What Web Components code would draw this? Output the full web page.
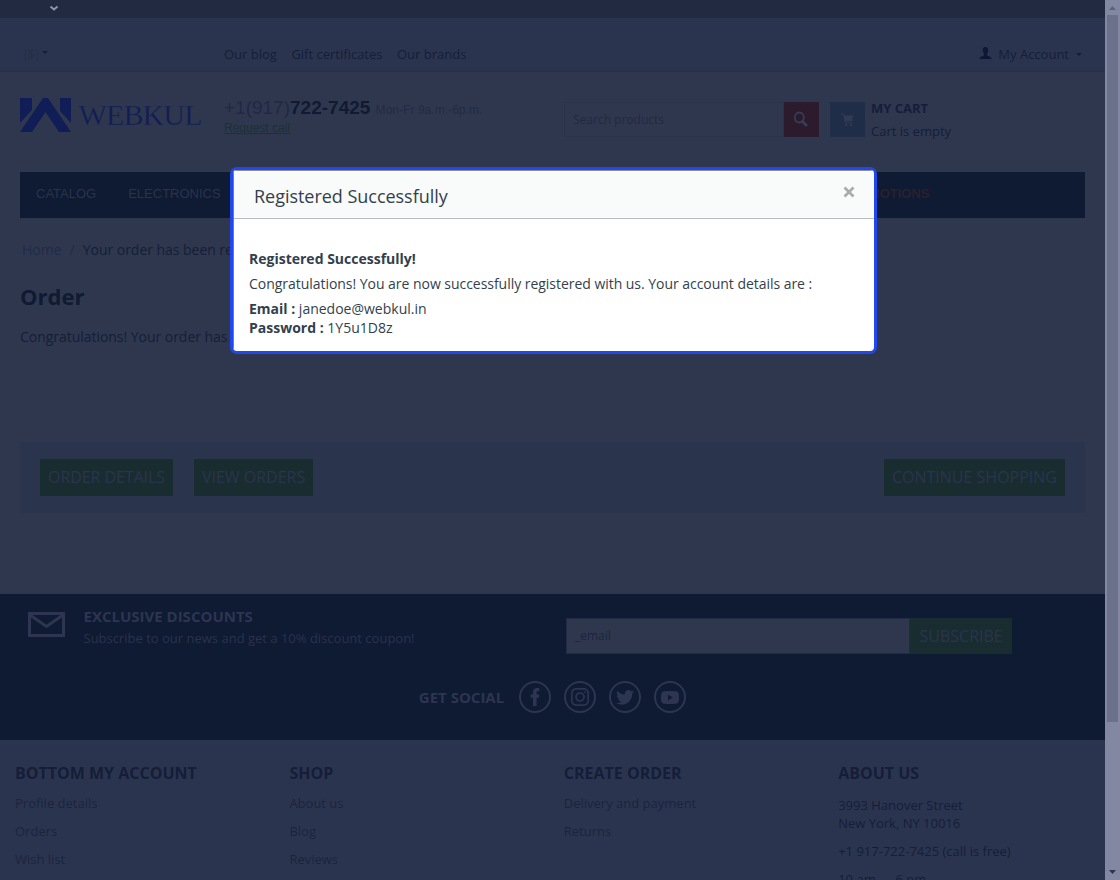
<!DOCTYPE html>
<html lang="en">
<head>
<meta charset="utf-8">
<title>Order</title>
<style>
	html, body {
		margin: 0;
		height: 880px;
		overflow: hidden;
	}
	body {
		font: 13px/18px "Open Sans", sans-serif;
		background: #2f374e;
		color: #141e38;
		--navy: #0f1a33;
		--strip: #2b344e;
		--green: #192d30;
	}
</style>
</head>
<body>
<shop-page>
	<top-panel slot="header"></top-panel>
	<shop-header slot="header"></shop-header>
	<shop-nav slot="header"></shop-nav>
	<order-content></order-content>
	<subscribe-panel slot="footer"></subscribe-panel>
	<footer-links slot="footer">
		<footer-column heading="BOTTOM MY ACCOUNT"><a>Profile details</a><a>Orders</a><a>Wish list</a></footer-column>
		<footer-column heading="SHOP"><a>About us</a><a>Blog</a><a>Reviews</a></footer-column>
		<footer-column heading="CREATE ORDER"><a>Delivery and payment</a><a>Returns</a></footer-column>
		<footer-column heading="ABOUT US" contact><p>3993 Hanover Street<br>New York, NY 10016</p><p>+1 917-722-7425 (call is free)</p><p>10 am — 6 pm</p></footer-column>
	</footer-links>
	<modal-dialog slot="dialog" heading="Registered Successfully">
		<b>Registered Successfully!</b>
		<p>Congratulations! You are now successfully registered with us. Your account details are :</p>
		<div><b>Email :</b> janedoe@webkul.in</div>
		<div><b>Password :</b> 1Y5u1D8z</div>
	</modal-dialog>
</shop-page>

<script>
function define(name,html){
	customElements.define(name,class extends HTMLElement {
		constructor(){
			super();
			this.attachShadow({mode:"open"});
			this.shadowRoot.innerHTML = html;
			let heading = this.shadowRoot.getElementById("heading");
			if (heading){
				heading.textContent = this.getAttribute("heading");
			}
		}
	});
}

define("shop-page",`
	<style>
		:host {
			display: flex;
			position: relative;
			width: 1120px;
			height: 880px;
			overflow: hidden;
		}
		main {
			width: 1105px;
			flex: none;
		}
	</style>
	<main>
		<slot name="header"></slot>
		<slot></slot>
		<slot name="footer"></slot>
	</main>
	<scroll-bar></scroll-bar>
	<slot name="dialog"></slot>
`);

define("scroll-bar",`
	<style>
		:host {
			display: flex;
			flex-direction: column;
			align-items: center;
			box-sizing: border-box;
			width: 15px;
			height: 880px;
			background: #8288a2;
		}
		svg {
			display: block;
			flex: none;
		}
		i {
			width: 11px;
			height: 707px;
			background: #6b718a;
		}
		span {
			flex: 1;
		}
	</style>
	<svg width="15" height="15"><path d="M4 10h7L7.500 6z" fill="#5d637c"/></svg>
	<i></i>
	<span></span>
	<svg width="15" height="15"><path d="M4 5h7L7.500 9z" fill="#2c334b"/></svg>
`);

define("drop-caret",`
	<style>
		:host {
			display: inline-block;
			border: 3px solid transparent;
			border-top-color: currentColor;
			border-bottom: 0;
		}
	</style>
`);

define("top-panel",`
	<style>
		:host {
			display: block;
		}
		.bar {
			height: 18px;
			background: #222a42;
		}
		.bar svg {
			display: block;
			margin-left: 49px;
		}
		.links {
			display: flex;
			align-items: center;
			box-sizing: border-box;
			height: 54px;
			padding: 19px 23px 0 24px;
			background: var(--strip);
			border-bottom: 1px solid #27304b;
		}
		.currency {
			width: 200px;
			color: #242e48;
		}
		.currency drop-caret {
			color: #141e38;
			vertical-align: 5px;
		}
		nav {
			display: flex;
			gap: 14.500px;
			flex: 1;
		}
		.account {
			display: flex;
			align-items: center;
		}
		.account span {
			margin: 0 7px 0 6px;
		}
	</style>
	<div class="bar"><svg width="10" height="16"><path d="M1.500 6.500L5 9.500L8.500 6.500" fill="none" stroke="#9298ac" stroke-width="1.800"/></svg></div>
	<div class="links">
		<div class="currency">($) <drop-caret></drop-caret></div>
		<nav><a>Our blog</a><a>Gift certificates</a><a>Our brands</a></nav>
		<div class="account">
			<svg width="13" height="14" fill="#0d1836"><path d="M6.500 0C8.600 0 9.300 1.500 9.200 3.500C9.100 5.500 8.300 6.300 8 7.200C7.800 8.300 8.500 8.700 10 9.300C11.800 9.900 12.500 10.500 12.500 12H0.500C0.500 10.500 1.200 9.900 3 9.300C4.500 8.700 5.200 8.300 5 7.200C4.700 6.300 3.900 5.500 3.800 3.500C3.700 1.500 4.400 0 6.500 0z"/></svg>
			<span>My Account</span>
			<drop-caret></drop-caret>
		</div>
	</div>
`);

define("web-logo",`
	<style>
		:host, svg {
			display: block;
		}
	</style>
	<svg width="184" height="36" fill="#111d56">
		<path d="M0 0h12v12L0 25zM51 0H40v13L51 25zM23 0h5L51 34H39L25.500 14L12 34H0z"/>
		<text x="58.500" y="27" font-family="Liberation Serif, serif" font-size="30" textLength="124" stroke="#2f374e" stroke-width=".4">WEBKUL</text>
	</svg>
`);

define("shop-header",`
	<style>
		:host {
			display: flex;
			align-items: flex-start;
			box-sizing: border-box;
			height: 100px;
			padding: 26px 20px 0;
		}
		web-logo {
			width: 204px;
		}
		.phone {
			width: 340px;
			font: 12px/14px "Liberation Sans", sans-serif;
		}
		.number {
			font-size: 19px;
			line-height: 20px;
			padding-bottom: 1px;
			color: #1f2944;
		}
		.number b {
			color: #0f1a33;
		}
		.number small {
			font-size: 12px;
			letter-spacing: .04px;
			color: #222b45;
		}
		.phone a {
			color: #1a3137;
			text-decoration: underline;
		}
		.search {
			display: flex;
			margin: 4px 11px 0 0;
		}
		.field {
			box-sizing: border-box;
			width: 220px;
			height: 35px;
			padding: 0 8px;
			border: 1px solid #29334d;
			font-size: 12px;
			line-height: 33px;
			color: #202a45;
		}
		.button {
			display: grid;
			place-items: center;
			width: 35px;
			height: 35px;
			background: #2c1b2c;
		}
		.search svg {
			margin: 0 2px 2px 0;
		}
		.cart {
			display: flex;
			margin-top: 4px;
		}
		.cart .button {
			background: #202d49;
		}
		.cart p {
			margin: -5px 0 0 6px;
			line-height: 23px;
		}
	</style>
	<web-logo></web-logo>
	<div class="phone">
		<div class="number">+1(917)<b>722-7425</b> <small>Mon-Fr 9a.m.-6p.m.</small></div>
		<a>Request call</a>
	</div>
	<div class="search">
		<div class="field">Search products</div>
		<div class="button"><svg width="16" height="16" fill="none" stroke="#343c56"><ellipse cx="6.300" cy="6.500" rx="4.500" ry="5" stroke-width="1.800"/><path d="M9.500 10.500L13 14" stroke-width="3" stroke-linecap="round"/></svg></div>
	</div>
	<div class="cart">
		<div class="button"><svg width="14" height="14" fill="#303a54"><path d="M0 .5h2.800L3.500 2.500H12L11 8H4.800L5 9.200h6.500v1H4L2 1.500H0z"/><circle cx="5.300" cy="12" r="1.200"/><circle cx="10" cy="12" r="1.200"/></svg></div>
		<p><b>MY CART</b><br>Cart is empty</p>
	</div>
`);

define("shop-nav",`
	<style>
		:host {
			display: flex;
			align-items: center;
			gap: 32px;
			box-sizing: border-box;
			width: 1065px;
			height: 46px;
			margin-left: 20px;
			padding: 0 155.500px 3px 16px;
			background: var(--navy);
			font: 13px/16px "Liberation Sans", sans-serif;
			color: #2b334b;
		}
		b {
			margin-left: auto;
			color: #29212e;
		}
	</style>
	<a>CATALOG</a><a>ELECTRONICS</a><b>PROMOTIONS</b>
`);

define("action-button",`
	<style>
		:host {
			display: block;
			box-sizing: border-box;
			height: 37px;
			padding: 0 8px;
			background: var(--green);
			color: #29344f;
			font-size: 16px;
			line-height: 37px;
			white-space: nowrap;
		}
	</style>
	<slot></slot>
`);

define("order-content",`
	<style>
		:host {
			display: block;
			box-sizing: border-box;
			height: 376px;
			padding: 22px 20px 0;
			font-size: 14px;
			line-height: 20px;
		}
		.crumbs {
			padding-left: 2px;
			letter-spacing: -.035px;
		}
		.crumbs span {
			color: #212b46;
		}
		.crumbs i {
			font-style: normal;
			margin: 0 4.500px;
			color: #212b46;
		}
		h1 {
			margin: 22px 0 0;
			font-size: 22px;
			line-height: 28px;
			color: #0f1a33;
		}
		p {
			margin: 17px 0 0;
			letter-spacing: -.035px;
		}
		.actions {
			display: flex;
			gap: 21px;
			box-sizing: border-box;
			height: 71px;
			margin-top: 95px;
			padding: 17px 20px;
			background: #2b344d;
		}
		.actions :first-child {
			letter-spacing: -.07px;
		}
		.actions :last-child {
			margin-left: auto;
		}
	</style>
	<div class="crumbs"><span>Home</span> <i>/</i> Your order has been received</div>
	<h1>Order</h1>
	<p>Congratulations! Your order has been placed</p>
	<div class="actions">
		<action-button>ORDER DETAILS</action-button>
		<action-button>VIEW ORDERS</action-button>
		<action-button>CONTINUE SHOPPING</action-button>
	</div>
`);

define("social-icon",`
	<style>
		:host {
			display: grid;
			place-items: center;
			box-sizing: border-box;
			width: 32px;
			height: 32px;
			border: 2px solid #2d3550;
			border-radius: 50%;
		}
	</style>
	<slot></slot>
`);

define("subscribe-panel",`
	<style>
		:host {
			display: block;
			box-sizing: border-box;
			height: 146px;
			background: var(--navy);
			color: #2a324c;
		}
		.top {
			display: flex;
			height: 87px;
		}
		.mail {
			margin: 18px 18.500px 0 28px;
		}
		.text {
			width: 482.500px;
			padding-top: 12px;
		}
		.text b {
			display: block;
			font-size: 15px;
			line-height: 21px;
			color: #2d3550;
		}
		.text span {
			display: block;
			line-height: 23px;
		}
		.form {
			display: flex;
			margin-top: 24px;
		}
		.field {
			box-sizing: border-box;
			width: 344px;
			height: 36px;
			padding: 0 8px;
			border: 1px solid #222b46;
			background: #2f374e;
			color: #1b2540;
			font-size: 12px;
			line-height: 34px;
		}
		action-button {
			height: 36px;
			padding: 0 9.500px;
			line-height: 36px;
		}
		.social {
			display: flex;
			align-items: center;
			justify-content: center;
			gap: 13px;
			height: 32px;
		}
		.social b {
			margin-right: 2px;
			font-size: 15px;
			color: #2d3550;
		}
	</style>
	<div class="top">
		<svg class="mail" width="37" height="26" fill="none" stroke="#2d3550" stroke-width="3"><path d="M1.500 1.500H35.500V23.500H1.500zM2 3L18.500 14.500L35 3"/></svg>
		<div class="text"><b>EXCLUSIVE DISCOUNTS</b><span>Subscribe to our news and get a 10% discount coupon!</span></div>
		<div class="form"><div class="field">_email</div><action-button>SUBSCRIBE</action-button></div>
	</div>
	<div class="social">
		<b>GET SOCIAL</b>
		<social-icon><svg width="10" height="18" fill="#2d3550"><path d="M3 18V9.800H.5V6.500H3V4.300C3 1.700 4.500 0 7 0H9.300V3.200H7.800C6.800 3.200 6.600 3.600 6.600 4.500V6.500H9.300L8.900 9.800H6.600V18z"/></svg></social-icon>
		<social-icon><svg width="18" height="18" fill="none" stroke="#2d3550" stroke-width="1.700"><rect x=".9" y=".9" width="16.200" height="16.200" rx="4"/><circle cx="9" cy="9" r="4"/><circle cx="13.900" cy="4.100" r=".7" fill="#2d3550" stroke-width=".8"/></svg></social-icon>
		<social-icon><svg width="18" height="15" viewBox="0 0 24 20" fill="#2d3550"><path d="M24 2.400c-.9.400-1.800.6-2.800.8 1-.6 1.800-1.600 2.200-2.700-1 .6-2 1-3.100 1.200A4.900 4.900 0 0 0 11.900 6.200C7.800 6 4.100 4 1.700 1 .4 3.200 1 6.100 3.200 7.600c-.8 0-1.600-.2-2.200-.6-.1 2.300 1.600 4.400 3.900 4.900-.7.200-1.500.2-2.200.1.600 2 2.400 3.400 4.600 3.400A9.900 9.900 0 0 1 0 17.400 14 14 0 0 0 7.500 19.600c9.100 0 14.300-7.700 14-14.600 1-.7 1.800-1.600 2.500-2.600z"/></svg></social-icon>
		<social-icon><svg width="18" height="13"><path fill="#2d3550" fill-rule="evenodd" d="M3 .3Q9-.3 15 .3Q17.500.5 17.800 3Q18.200 6.500 17.800 10Q17.500 12.500 15 12.700Q9 13.300 3 12.700Q.5 12.500.2 10Q-.2 6.500.2 3Q.5.500 3 .3zM7 3.700V9.300L12 6.500z"/></svg></social-icon>
	</div>
`);

define("footer-links",`
	<style>
		:host {
			display: grid;
			grid-template-columns: repeat(4, 274.400px);
			box-sizing: border-box;
			height: 240px;
			padding: 23px 0 0 15px;
			background: var(--strip);
			overflow: hidden;
		}
	</style>
	<slot></slot>
`);

define("footer-column",`
	<style>
		:host {
			display: block;
			color: #1a243f;
		}
		:host([contact]) {
			color: #141e38;
		}
		h2 {
			margin: 0 0 11px;
			font-size: 16px;
			line-height: 20px;
			color: #141e38;
		}
		::slotted(a) {
			display: block;
			margin-bottom: 10px;
		}
		::slotted(p) {
			margin: 0 0 10px;
		}
		:host([contact]) h2 {
			margin-bottom: 13px;
		}
	</style>
	<h2 id="heading"></h2>
	<slot></slot>
`);

define("modal-dialog",`
	<style>
		:host {
			display: block;
			position: absolute;
			left: 230px;
			top: 167px;
			box-sizing: border-box;
			width: 647px;
			height: 187px;
			border: 3px solid #2148ef;
			border-radius: 7px;
			background: #fff;
			color: #333f4c;
			font-size: 14px;
			line-height: 19px;
			overflow: hidden;
		}
		header {
			display: flex;
			justify-content: space-between;
			box-sizing: border-box;
			height: 49px;
			padding: 0 19px 0 20px;
			border-top: 1px solid #8a8d94;
			border-bottom: 1px solid #b8bec3;
			background: #f9fafa;
		}
		h3 {
			margin: 0;
			font-size: 18px;
			font-weight: normal;
			line-height: 51px;
			letter-spacing: -.03px;
		}
		header svg {
			margin-top: 15px;
		}
		.frame {
			box-sizing: border-box;
			height: 100%;
			border-left: 1px solid #777c8c;
		}
		.body {
			padding: 30px 15px 0;
		}
		::slotted(p) {
			margin: 6px 0;
			letter-spacing: -.035px;
		}
	</style>
	<div class="frame">
		<header><h3 id="heading"></h3><svg width="12" height="12"><path d="M1.500 1.500L10.500 10.500M10.500 1.500L1.500 10.500" stroke="#aaa" stroke-width="2.700"/></svg></header>
		<div class="body"><slot></slot></div>
	</div>
`);
</script>
</body>
</html>
